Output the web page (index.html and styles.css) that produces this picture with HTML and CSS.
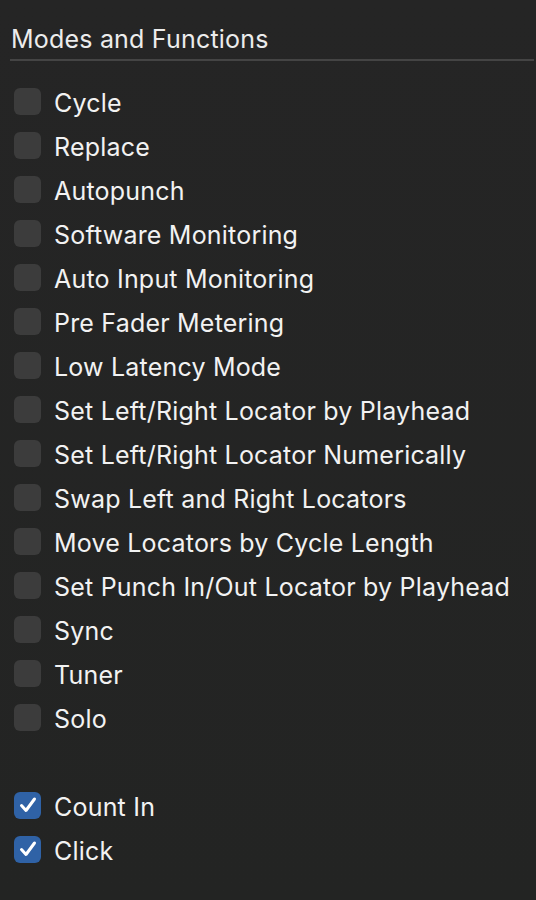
FILE: index.html
```html
<!DOCTYPE html>
<html>
<head>
<meta charset="utf-8">
<link rel="stylesheet" href="styles.css">
</head>
<body>
<div class="panel">
  <div class="title">Modes and Functions</div>
  <ul class="list">
    <li class="item"><span class="box"></span><span class="label">Cycle</span></li>
    <li class="item"><span class="box"></span><span class="label">Replace</span></li>
    <li class="item"><span class="box"></span><span class="label">Autopunch</span></li>
    <li class="item"><span class="box"></span><span class="label">Software Monitoring</span></li>
    <li class="item"><span class="box"></span><span class="label">Auto Input Monitoring</span></li>
    <li class="item"><span class="box"></span><span class="label">Pre Fader Metering</span></li>
    <li class="item"><span class="box"></span><span class="label">Low Latency Mode</span></li>
    <li class="item"><span class="box"></span><span class="label">Set Left/Right Locator by Playhead</span></li>
    <li class="item"><span class="box"></span><span class="label">Set Left/Right Locator Numerically</span></li>
    <li class="item"><span class="box"></span><span class="label">Swap Left and Right Locators</span></li>
    <li class="item"><span class="box"></span><span class="label">Move Locators by Cycle Length</span></li>
    <li class="item"><span class="box"></span><span class="label">Set Punch In/Out Locator by Playhead</span></li>
    <li class="item"><span class="box"></span><span class="label">Sync</span></li>
    <li class="item"><span class="box"></span><span class="label">Tuner</span></li>
    <li class="item"><span class="box"></span><span class="label">Solo</span></li>
  </ul>
  <ul class="list list-checked">
    <li class="item"><span class="box checked"><svg viewBox="0 0 26 26" width="26" height="26"><path d="M6.5 13.5 L11 18.5 L19.5 7" fill="none" stroke="#fff" stroke-width="3" stroke-linecap="round" stroke-linejoin="round"/></svg></span><span class="label">Count In</span></li>
    <li class="item"><span class="box checked"><svg viewBox="0 0 26 26" width="26" height="26"><path d="M6.5 13.5 L11 18.5 L19.5 7" fill="none" stroke="#fff" stroke-width="3" stroke-linecap="round" stroke-linejoin="round"/></svg></span><span class="label">Click</span></li>
  </ul>
</div>
</body>
</html>
```
FILE: styles.css
```css
html, body {
  margin: 0;
  padding: 0;
  background: #242424;
}
body {
  width: 536px;
  height: 900px;
  background: linear-gradient(#252525, #232423);
  font-family: Inter, "Noto Sans", sans-serif;
  color: #f2f2f2;
}
.panel {
  padding: 22px 2px 0 10px;
}
.title {
  font-size: 25px;
  letter-spacing: 0.2px;
  line-height: 34px;
  padding-left: 1px;
  color: #ececec;
  border-bottom: 2px solid #444444;
  height: 37px;
}
.list {
  list-style: none;
  margin: 18px 0 0 0;
  padding: 0;
}
.list-checked {
  margin-top: 44px;
}
.item {
  display: flex;
  align-items: center;
  height: 44px;
}
.box {
  width: 27px;
  height: 27px;
  margin-left: 4px;
  margin-right: 13px;
  border-radius: 6px;
  background: #3c3c3c;
  display: flex;
  align-items: center;
  justify-content: center;
  flex: none;
}
.box.checked {
  background: #2f62a6;
}
.label {
  font-size: 25px;
  letter-spacing: 0.2px;
  line-height: 30px;
  padding-top: 3px;
}
```
